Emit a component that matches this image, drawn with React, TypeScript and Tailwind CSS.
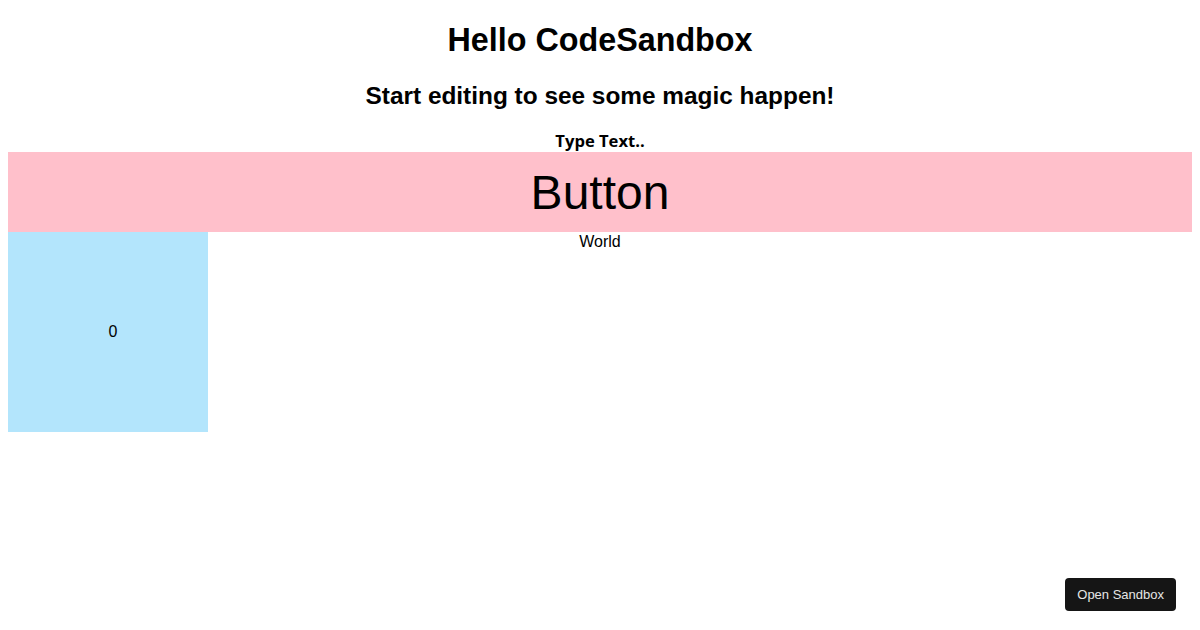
import React from "react";

export default function App() {
  return (
    <div className="min-h-[630px] bg-white px-2 text-center text-black" style={{ fontFamily: '"Liberation Sans", Arial, sans-serif' }}>
      <h1 className="pt-[22px] text-[32.3px] font-bold leading-[37px]">Hello CodeSandbox</h1>
      <h2 className="mt-[23px] text-[24.4px] font-bold leading-[28px]">Start editing to see some magic happen!</h2>
      <div className="mt-[18px] h-[24px] text-[16.6px] font-bold leading-[26px]" style={{ fontFamily: '"Open Sans", "Noto Sans", sans-serif' }}>
        Type Text..
      </div>
      <div className="flex h-[80px] items-center justify-center bg-[#ffc0cb] text-[48px] leading-[55px]">Button</div>
      <div className="grid">
        <div className="col-start-1 row-start-1 flex h-[200px] w-[200px] items-center justify-center bg-[#b3e5fc] pl-[10px] text-[16px]">0</div>
        <div className="col-start-1 row-start-1 pt-[1px] text-[16px] leading-[18px]">World</div>
      </div>
      <button className="fixed bottom-[19px] right-[24px] flex h-[33px] items-center rounded-[4px] bg-[#151515] px-[12px] text-[13px] text-[#e6e6e6]">
        Open Sandbox
      </button>
    </div>
  );
}
